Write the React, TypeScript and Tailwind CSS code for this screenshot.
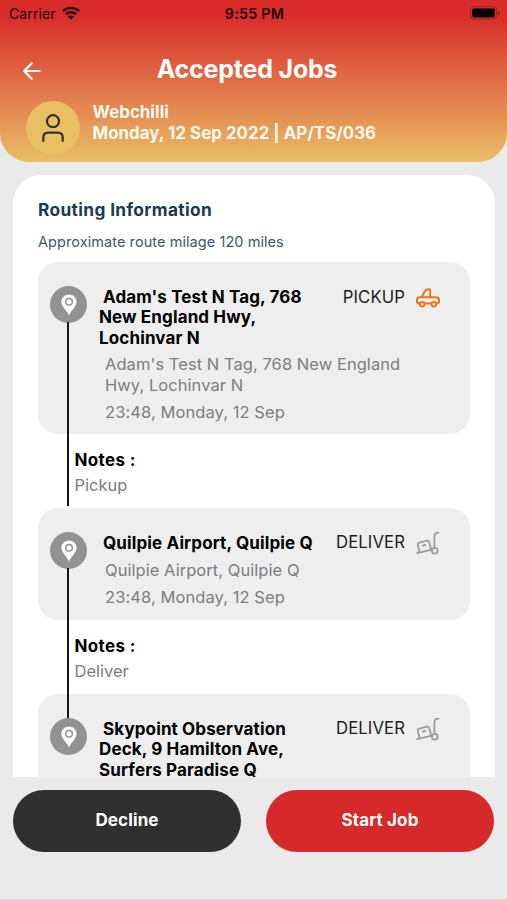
import React from 'react';

type Stop = {
  title: string[];
  address: string[];
  time?: string;
  kind: 'PICKUP' | 'DELIVER';
  notes?: string;
  box: string;
  gap: string;
  line: string;
};

const stops: Stop[] = [
  {
    title: ["Adam's Test N Tag, 768", 'New England Hwy,', 'Lochinvar N'],
    address: ["Adam's Test N Tag, 768 New England", 'Hwy, Lochinvar N'],
    time: '23:48, Monday, 12 Sep',
    kind: 'PICKUP',
    notes: 'Pickup',
    box: 'h-[172px] rounded-[20px]',
    gap: 'mt-[6px]',
    line: 'top-[60px] h-[184px]',
  },
  {
    title: ['Quilpie Airport, Quilpie Q'],
    address: ['Quilpie Airport, Quilpie Q'],
    time: '23:48, Monday, 12 Sep',
    kind: 'DELIVER',
    notes: 'Deliver',
    box: 'h-[112px] rounded-[20px]',
    gap: 'mt-[6.500px]',
    line: 'top-[60px] h-[150px]',
  },
  {
    title: ['Skypoint Observation', 'Deck, 9 Hamilton Ave,', 'Surfers Paradise Q'],
    address: [],
    kind: 'DELIVER',
    box: 'h-[84px] rounded-t-[20px]',
    gap: '',
    line: 'hidden',
  },
];

function WifiIcon() {
  return (
    <svg className="-mt-[2px] ml-[6px] h-[14px] w-[18px]" viewBox="0 0 18 14" fill="none" stroke="#260806" strokeWidth="2.4">
      <path d="M.9 5.100C5.400.8 12.600.8 17.100 5.100" />
      <path d="M3.900 8.200c2.900-2.700 7.300-2.700 10.200 0" />
      <path d="M9 13.700 5.900 10.600c1.700-1.600 4.500-1.600 6.200 0Z" fill="#260806" stroke="none" />
    </svg>
  );
}

function BatteryIcon() {
  return (
    <svg className="-mt-[2px] h-[14px] w-[30px]" viewBox="0 0 30 14">
      <rect x=".5" y=".7" width="26" height="12.400" rx="3.200" fill="none" stroke="#7a1a18" strokeOpacity=".65" />
      <rect x="2.200" y="2.400" width="22.600" height="9" rx="1.600" fill="#000" />
      <path d="M28 5v4c1.800-.7 1.800-3.300 0-4Z" fill="#7a1a18" />
    </svg>
  );
}

function PinBadge() {
  return (
    <span className="flex h-[37px] w-[37px] items-center justify-center rounded-full bg-[#929292]">
      <svg className="h-[22px] w-4" viewBox="0 0 16 22">
        <path d="M8 .4C3.800.4.4 3.700.4 7.800c0 4.600 4.900 7.900 7.600 13.600 2.700-5.700 7.600-9 7.600-13.600C15.600 3.700 12.200.4 8 .4Z" fill="#fff" />
        <circle cx="8" cy="7.700" r="3.300" fill="#fff" stroke="#929292" strokeWidth="1.500" />
      </svg>
    </span>
  );
}

function TruckIcon() {
  return (
    <svg className="mt-[2px] h-[20px] w-[24px]" viewBox="0 0 24 20" fill="none" stroke="#ec7420" strokeWidth="2" strokeLinecap="round" strokeLinejoin="round">
      <path d="M3.500 15.500h-.6c-1.100 0-1.900-.8-1.900-1.900v-1.300C1 10.600 2.300 9.300 4 9.300h16c1.700 0 3 1.300 3 3v1.300c0 1.100-.8 1.900-1.900 1.900h-.6M9 15.500h6" />
      <path d="M5.600 9.200 8.500 3.800c.9-1.700 2-2.500 3.900-2.500h.6c.7 0 1.200.5 1.200 1.200v6.700" />
      <circle cx="6.200" cy="16.300" r="2.300" />
      <circle cx="17.800" cy="16.300" r="2.300" />
    </svg>
  );
}

function TrolleyIcon() {
  return (
    <svg className="h-[24px] w-[24px]" viewBox="0 0 24 24" fill="none" stroke="#9b9b9b" strokeWidth="1.800" strokeLinecap="round" strokeLinejoin="round">
      <path d="M1.200 22.200 15.800 18.600M22.400 1.600c-2.700.1-4 1-4 3.300v11.800" />
      <circle cx="18.800" cy="19.800" r="2.900" />
      <path d="M3.400 20.500 1.900 14.200c-.3-1.400.3-2.300 1.500-2.600l7.400-1.900c1.300-.3 2.100.2 2.400 1.500l2 7.400" />
      <path d="M6.900 14.600 9.300 14" strokeWidth="2" />
    </svg>
  );
}

function StopRow({ stop }: { stop: Stop }) {
  return (
    <section className="relative">
      <div className={`flex bg-[#eee] pl-3 ${stop.box}`}>
        <div className="pt-6">
          <PinBadge />
        </div>
        <div className="ml-3 mt-[24.800px] w-[230px] shrink-0 whitespace-nowrap">
          <h3 className="text-[17px] font-bold leading-[20.400px] tracking-[0.130px] text-black">
            {stop.title.map((t, i) => (
              <span key={t} className={`block w-max ${i === 0 ? 'pl-1' : ''}`}>{t}</span>
            ))}
          </h3>
          {stop.time && (
            <>
              <p className={`${stop.gap} pl-[6px] text-[16.500px] leading-[20.600px] tracking-[0.050px] text-[#7d7d7d]`}>
                {stop.address.map((t) => (
                  <span key={t} className="block w-max">{t}</span>
                ))}
              </p>
              <p className="mt-[6.500px] w-max pl-[6px] text-[16.500px] leading-[20.600px] tracking-[0.080px] text-[#7d7d7d]">{stop.time}</p>
            </>
          )}
        </div>
        <div className="mt-[23px] flex h-[24px] w-[111px] shrink-0 items-center justify-end gap-[11px] whitespace-nowrap">
          <span className={`text-[16.700px] leading-[21px] tracking-[0.100px] text-[#1c1c1c] ${stop.kind === 'DELIVER' ? '-mt-[1px]' : ''}`}>{stop.kind}</span>
          {stop.kind === 'PICKUP' ? <TruckIcon /> : <TrolleyIcon />}
        </div>
      </div>
      {stop.notes && (
        <div className="h-[74px] pl-[36.500px] pt-[15.500px]">
          <h4 className="text-[17px] font-bold leading-[21px] tracking-[0.350px] text-black">Notes :</h4>
          <p className="mt-[4.500px] text-[16.500px] leading-[21px] text-[#7d7d7d]">{stop.notes}</p>
        </div>
      )}
      <span className={`absolute left-[29px] z-10 w-[2px] bg-[#151515] ${stop.line}`} />
    </section>
  );
}

export default function App() {
  return (
    <div className="flex h-[900px] w-[507px] flex-col overflow-hidden bg-[#eaeaea] font-['Inter','Liberation_Sans',sans-serif]">
      <header className="h-[162px] shrink-0 rounded-b-[29px] bg-[linear-gradient(180deg,#d92b2b_0%,#d92d2b_10%,#e9be66_100%)]">
        <div className="grid h-[28px] grid-cols-3 items-center pl-[9px] pr-[7px] text-[14.200px] text-[#260806]">
          <div className="flex items-center"><span>Carrier</span><WifiIcon /></div>
          <span className="text-center font-semibold tracking-[0.300px]">9:55 PM</span>
          <div className="flex justify-end"><BatteryIcon /></div>
        </div>
        <div className="flex h-[73px] items-center px-[22px] pt-[12px]">
          <svg className="h-5 w-5 text-white" viewBox="0 0 20 20" fill="none" stroke="currentColor" strokeWidth="2.200" strokeLinecap="round" strokeLinejoin="round">
            <path d="M17.600 10H2.200M9.700 2.200 2.200 10l7.500 7.800" />
          </svg>
          <h1 className="-mt-[4px] flex-1 pr-[33px] text-center text-[25px] font-bold leading-[30px] tracking-[-0.200px] text-white">Accepted Jobs</h1>
        </div>
        <div className="flex pl-[26px]">
          <span className="flex h-[54px] w-[54px] items-center justify-center rounded-full bg-[#e9bf64]">
            <svg className="h-[28px] w-[24px]" viewBox="0 0 24 28" fill="none" stroke="#333029" strokeWidth="2.200">
              <circle cx="12" cy="7.200" r="6" />
              <path d="M2.300 27.800v-4.300c0-3 1.800-4.900 4.800-4.900h9.800c3 0 4.800 1.900 4.800 4.900v4.300" />
            </svg>
          </span>
          <div className="ml-[12.500px] mt-[1px] text-[16.800px] font-bold leading-[20.600px] tracking-[0.080px] text-[#fffaf0]">
            <p>Webchilli</p>
            <p>Monday, 12 Sep 2022 | AP/TS/036</p>
          </div>
        </div>
      </header>
      <main className="ml-[13px] mt-[13px] h-[602px] w-[482px] shrink-0 overflow-hidden rounded-t-[28px] bg-white px-[25px] pt-[24px]">
        <h2 className="text-[17.300px] font-bold leading-[22px] tracking-[0.360px] text-[#183c50]">Routing Information</h2>
        <p className="mt-[12px] text-[14.500px] leading-[18px] tracking-[0.070px] text-[#3e5969]">Approximate route milage 120 miles</p>
        <div className="mt-[11px] w-[432px]">
          {stops.map((s) => <StopRow key={s.title[0]} stop={s} />)}
        </div>
      </main>
      <footer className="flex h-[123px] gap-[25px] border-b border-[#d6d6d6] pl-[13px] pt-[13px] text-[17px] font-bold tracking-[0.120px] text-white">
        <button className="h-[62px] w-[228px] rounded-full bg-[#303030] pb-px">Decline</button>
        <button className="h-[62px] w-[228px] rounded-full bg-[#d62929] pb-px">Start Job</button>
      </footer>
    </div>
  );
}
